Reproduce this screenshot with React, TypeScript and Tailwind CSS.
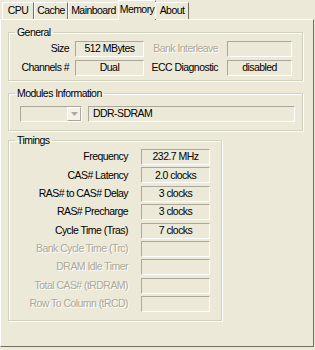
import React from "react";

type Row = { label: string; value?: string; disabled?: boolean };

const timings: Row[] = [
  { label: "Frequency", value: "232.7 MHz" },
  { label: "CAS# Latency", value: "2.0 clocks" },
  { label: "RAS# to CAS# Delay", value: "3 clocks" },
  { label: "RAS# Precharge", value: "3 clocks" },
  { label: "Cycle Time (Tras)", value: "7 clocks" },
  { label: "Bank Cycle Time (Trc)", disabled: true },
  { label: "DRAM Idle Timer", disabled: true },
  { label: "Total CAS# (tRDRAM)", disabled: true },
  { label: "Row To Column (tRCD)", disabled: true },
];

const tabs = [
  { name: "CPU", w: "w-[32px]" },
  { name: "Cache", w: "w-[34px]" },
  { name: "Mainboard", w: "w-[51px]" },
  { name: "Memory", w: "w-[38px]", active: true },
  { name: "About", w: "w-[34px]" },
];

function Field({ value, className = "" }: { value?: string; className?: string }) {
  return (
    <div
      className={`flex h-[16px] items-center justify-center border border-t-[#aca899] border-l-[#aca899] border-b-white border-r-white text-black ${className}`}
    >
      {value}
    </div>
  );
}

function Group({
  title,
  className = "",
  children,
}: {
  title: string;
  className?: string;
  children: React.ReactNode;
}) {
  return (
    <fieldset
      className={`border border-[#d0d0bf] shadow-[inset_1px_1px_0_#fff,1px_1px_0_#fff] ${className}`}
    >
      <legend className="ml-[6px] px-[2px] leading-[13px] text-black">{title}</legend>
      {children}
    </fieldset>
  );
}

export default function App() {
  return (
    <div className="h-[350px] w-[315px] overflow-hidden bg-[#ece9d8] font-['Liberation_Sans',Arial,sans-serif] text-[10.5px] tracking-[-0.55px] text-black">
      {/* Tabs */}
      <div className="relative z-10 flex h-[19px] items-end pl-[2px]">
        {tabs.map((t) =>
          t.active ? (
            <div
              key={t.name}
              className={`-mx-[1px] -mb-[1px] flex h-[20px] items-center justify-center border-t border-l border-r border-t-white border-l-white border-r-[#716f64] bg-[#ece9d8] pb-[1px] ${t.w}`}
            >
              {t.name}
            </div>
          ) : (
            <div
              key={t.name}
              className={`flex h-[17px] items-center justify-center border-t border-l border-r border-t-white border-l-white border-r-[#716f64] ${t.w}`}
            >
              {t.name}
            </div>
          ),
        )}
      </div>

      {/* Panel */}
      <div className="h-[328px] w-[314px] border border-t-white border-l-white border-r-[#716f64] border-b-[#716f64] pl-[7px]">
        <Group title="General" className="mt-[6px] w-[295px] pb-[4px]">
          <div className="mt-[2px] flex flex-col gap-[3px]">
            <div className="flex h-[16px] items-center">
              <span className="w-[60px] text-right">Size</span>
              <Field value="512 MBytes" className="ml-[6px] w-[69px]" />
              <span className="w-[74px] text-right text-[#aca899] [text-shadow:1px_1px_0_#fff]">
                Bank Interleave
              </span>
              <Field className="ml-[9px] w-[65px]" />
            </div>
            <div className="flex h-[16px] items-center">
              <span className="w-[60px] text-right">Channels #</span>
              <Field value="Dual" className="ml-[6px] w-[69px]" />
              <span className="w-[74px] text-right">ECC Diagnostic</span>
              <Field value="disabled" className="ml-[9px] w-[65px]" />
            </div>
          </div>
        </Group>

        <Group title="Modules Information" className="mt-[6px] w-[295px] pb-[8px]">
          <div className="mt-[6px] flex h-[16px] items-center pl-[11px]">
            <div className="flex h-[16px] w-[62px] justify-end border border-t-[#aca899] border-l-[#aca899] border-b-white border-r-white">
              <div className="flex h-full w-[14px] items-center justify-center border border-t-white border-l-white border-b-[#aca899] border-r-[#aca899] bg-[#f3f1e8]">
                <svg width="7" height="4" viewBox="0 0 7 4">
                  <path d="M0 0h7L3.5 4z" fill="#aca899" />
                </svg>
              </div>
            </div>
            <div className="ml-[6px] flex h-[16px] w-[207px] items-center border border-t-[#aca899] border-l-[#aca899] border-b-white border-r-white pl-[4px]">
              DDR-SDRAM
            </div>
          </div>
        </Group>

        <Group title="Timings" className="mt-[3px] w-[214px] pb-[8px]">
          <div className="mt-[2px] flex flex-col gap-[2.375px]">
            {timings.map((r) => (
              <div key={r.label} className="flex h-[16px] items-center">
                <span
                  className={`w-[119px] text-right ${
                    r.disabled ? "text-[#aca899] [text-shadow:1px_1px_0_#fff]" : ""
                  }`}
                >
                  {r.label}
                </span>
                <Field value={r.value} className="ml-[13px] w-[69px]" />
              </div>
            ))}
          </div>
        </Group>
      </div>
    </div>
  );
}
